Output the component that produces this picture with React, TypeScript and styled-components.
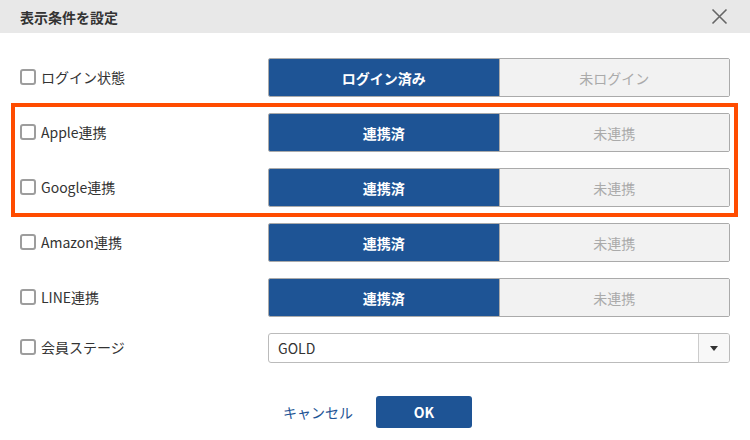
import React from "react";
import styled, { createGlobalStyle } from "styled-components";

const Global = createGlobalStyle`
  html, body { margin: 0; padding: 0; background: #fff; }
  body { font-family: "Noto Sans CJK JP", "Noto Sans", sans-serif; color: #333; }
  * { box-sizing: border-box; }
`;

const Dialog = styled.div`
  width: 750px;
  height: 440px;
  background: #fff;
  display: flex;
  flex-direction: column;
`;

const Header = styled.div`
  height: 33px;
  background: #e8e8e8;
  display: flex;
  align-items: center;
  justify-content: space-between;
  padding: 0 20px;
`;

const Title = styled.div`
  font-size: 14px;
  font-weight: 700;
  color: #333;
  line-height: 1;
`;

const Close = styled.button`
  border: none;
  background: none;
  padding: 0;
  width: 17px;
  height: 17px;
  display: flex;
  margin-right: 2px;
  color: #666;
`;

const Body = styled.div`
  display: flex;
  flex-direction: column;
  gap: 16px;
  padding: 25px 20px 0 20px;
`;

const Highlight = styled.div`
  display: flex;
  flex-direction: column;
  gap: 16px;
  margin: -10px -8px -10px -9px;
  border: 4px solid #ff4c00;
  padding: 6px 4px 6px 5px;
`;

const Row = styled.div<{ $h?: number }>`
  display: grid;
  grid-template-columns: 248px 462px;
  align-items: center;
  height: ${(p) => p.$h ?? 39}px;
`;

const Label = styled.label`
  display: flex;
  align-items: center;
  gap: 5px;
  font-size: 14px;
  color: #333;
  margin-top: -2px;
`;

const Check = styled.span`
  display: block;
  width: 16px;
  height: 16px;
  border: 2px solid #9d9d9d;
  border-radius: 3px;
  background: #fff;
  flex: 0 0 16px;
`;

const Toggle = styled.div`
  display: flex;
  height: 39px;
  border: 1px solid #aaa;
  border-radius: 2px;
  overflow: hidden;
`;

const Segment = styled.div<{ $active?: boolean }>`
  flex: 1;
  display: flex;
  align-items: center;
  justify-content: center;
  font-size: 14px;
  font-weight: ${(p) => (p.$active ? 700 : 400)};
  color: ${(p) => (p.$active ? "#fff" : "#aaa")};
  background: ${(p) => (p.$active ? "#1e5495" : "#f2f2f2")};
  & + & {
    border-left: 1px solid #aaa;
  }
`;

const Select = styled.div`
  display: flex;
  height: 30px;
  border: 1px solid #bbb;
  border-radius: 3px;
  overflow: hidden;
`;

const SelectValue = styled.div`
  flex: 1;
  display: flex;
  align-items: center;
  padding-left: 9px;
  font-size: 14px;
  color: #333;
`;

const SelectArrow = styled.div`
  width: 31px;
  border-left: 1px solid #ccc;
  background: #f8f8f8;
  display: flex;
  align-items: center;
  justify-content: center;
`;

const Footer = styled.div`
  display: flex;
  justify-content: center;
  align-items: center;
  gap: 23px;
  margin-top: 33px;
  padding-left: 5px;
`;

const CancelButton = styled.button`
  border: none;
  background: none;
  padding: 0;
  font-family: inherit;
  font-size: 14px;
  color: #1e5495;
`;

const OkButton = styled.button`
  width: 96px;
  height: 32px;
  border: none;
  border-radius: 3px;
  background: #1e5495;
  color: #fff;
  font-family: inherit;
  font-size: 14px;
  font-weight: 700;
`;

type ToggleRowProps = { label: string; on: string; off: string };

const ToggleRow = ({ label, on, off }: ToggleRowProps) => (
  <Row>
    <Label>
      <Check />
      {label}
    </Label>
    <Toggle>
      <Segment $active>{on}</Segment>
      <Segment>{off}</Segment>
    </Toggle>
  </Row>
);

export default function App() {
  return (
    <>
      <Global />
      <Dialog>
        <Header>
          <Title>表示条件を設定</Title>
          <Close aria-label="close">
            <svg width="17" height="17" viewBox="0 0 17 17">
              <path d="M1.5 1.5L15.5 15.5M15.5 1.5L1.5 15.5" stroke="#666" strokeWidth="1.6" fill="none" />
            </svg>
          </Close>
        </Header>
        <Body>
          <ToggleRow label="ログイン状態" on="ログイン済み" off="未ログイン" />
          <Highlight>
            <ToggleRow label="Apple連携" on="連携済" off="未連携" />
            <ToggleRow label="Google連携" on="連携済" off="未連携" />
          </Highlight>
          <ToggleRow label="Amazon連携" on="連携済" off="未連携" />
          <ToggleRow label="LINE連携" on="連携済" off="未連携" />
          <Row $h={30}>
            <Label>
              <Check />
              会員ステージ
            </Label>
            <Select>
              <SelectValue>GOLD</SelectValue>
              <SelectArrow>
                <svg width="8" height="5" viewBox="0 0 8 5">
                  <path d="M0 0H8L4 5Z" fill="#333" />
                </svg>
              </SelectArrow>
            </Select>
          </Row>
        </Body>
        <Footer>
          <CancelButton>キャンセル</CancelButton>
          <OkButton>OK</OkButton>
        </Footer>
      </Dialog>
    </>
  );
}
